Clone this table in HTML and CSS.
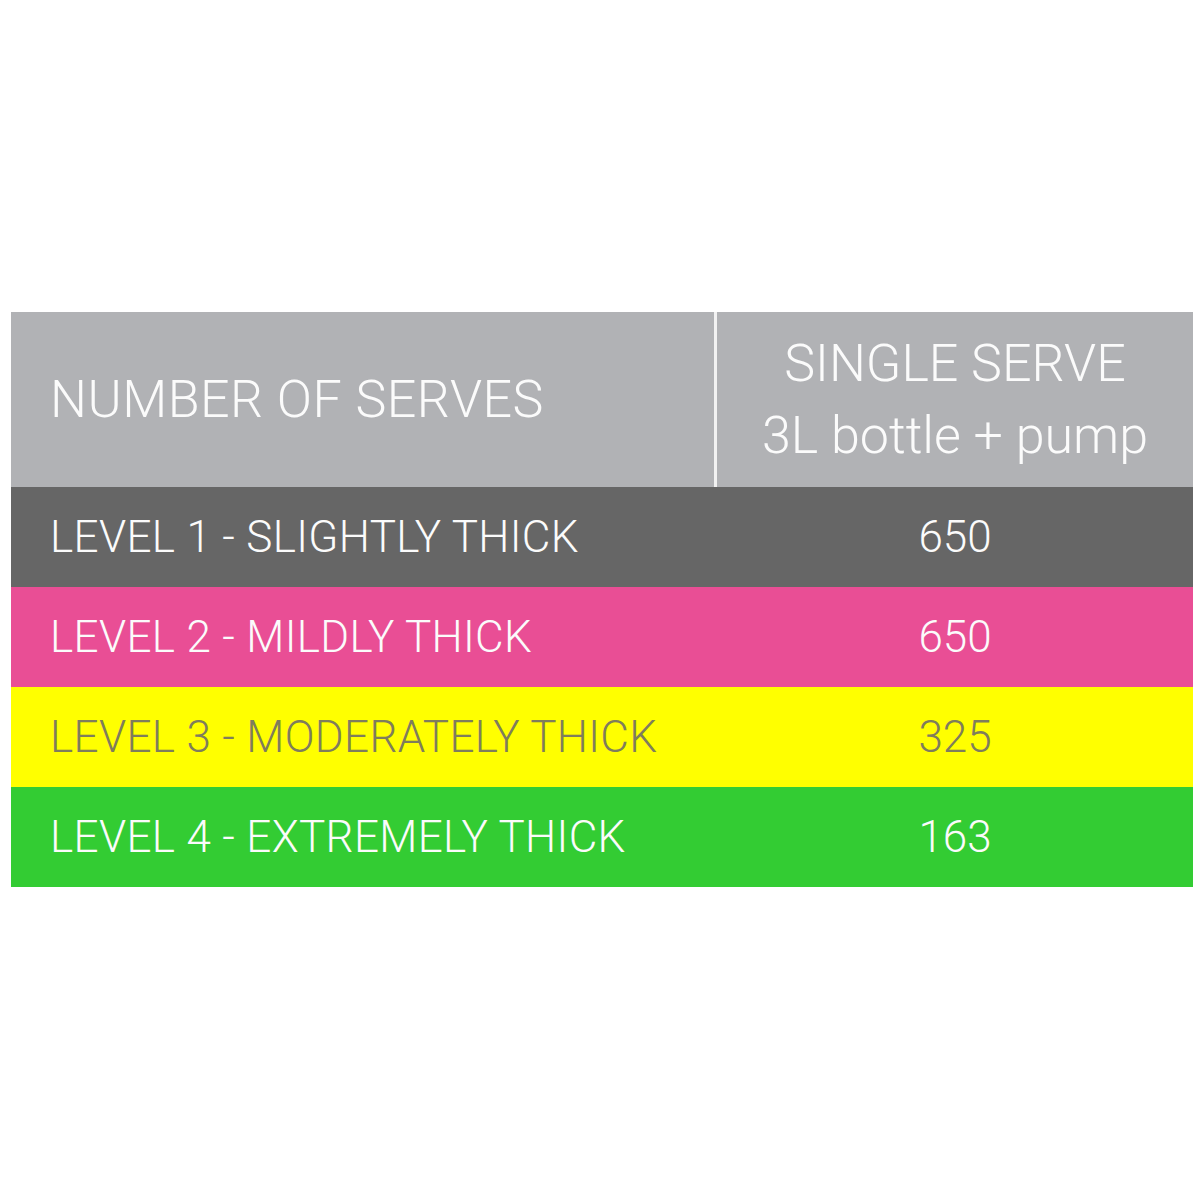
FILE: index.html
```html
<!DOCTYPE html>
<html>
<head>
<meta charset="utf-8">
<link rel="stylesheet" href="styles.css">
</head>
<body>
<div class="table">
  <div class="row head">
    <div class="cell label">NUMBER OF SERVES</div>
    <div class="cell value">SINGLE SERVE<br>3L bottle + pump</div>
  </div>
  <div class="row lvl1">
    <div class="cell label">LEVEL 1 - SLIGHTLY THICK</div>
    <div class="cell value">650</div>
  </div>
  <div class="row lvl2">
    <div class="cell label">LEVEL 2 - MILDLY THICK</div>
    <div class="cell value">650</div>
  </div>
  <div class="row lvl3">
    <div class="cell label">LEVEL 3 - MODERATELY THICK</div>
    <div class="cell value">325</div>
  </div>
  <div class="row lvl4">
    <div class="cell label">LEVEL 4 - EXTREMELY THICK</div>
    <div class="cell value">163</div>
  </div>
</div>
</body>
</html>
```

FILE: styles.css
```css
html, body {
  margin: 0;
  padding: 0;
  background: #ffffff;
}
body {
  font-family: Roboto, "Liberation Sans", sans-serif;
  font-weight: 300;
}
.table {
  margin: 312px 0 0 11px;
  width: 1182px;
  display: flex;
  flex-direction: column;
}
.row {
  display: grid;
  grid-template-columns: 706px 476px;
  height: 100px;
  color: #fbfbfb;
  font-size: 44px;
}
.cell {
  display: flex;
  align-items: center;
  box-sizing: border-box;
}
.label {
  padding-left: 39px;
  white-space: nowrap;
  letter-spacing: 0.35px;
}
.value {
  justify-content: center;
  text-align: center;
}
.head {
  height: 175px;
  background: #b1b2b5;
  font-size: 52px;
  line-height: 72px;
}
.head .label {
  border-right: 3px solid #f2f2f2;
  letter-spacing: 0.5px;
}
.lvl1 { background: #666666; }
.lvl2 { background: #e94e95; }
.lvl3 { background: #ffff00; color: #7f7d5c; }
.lvl4 { background: #33cc33; }
```
